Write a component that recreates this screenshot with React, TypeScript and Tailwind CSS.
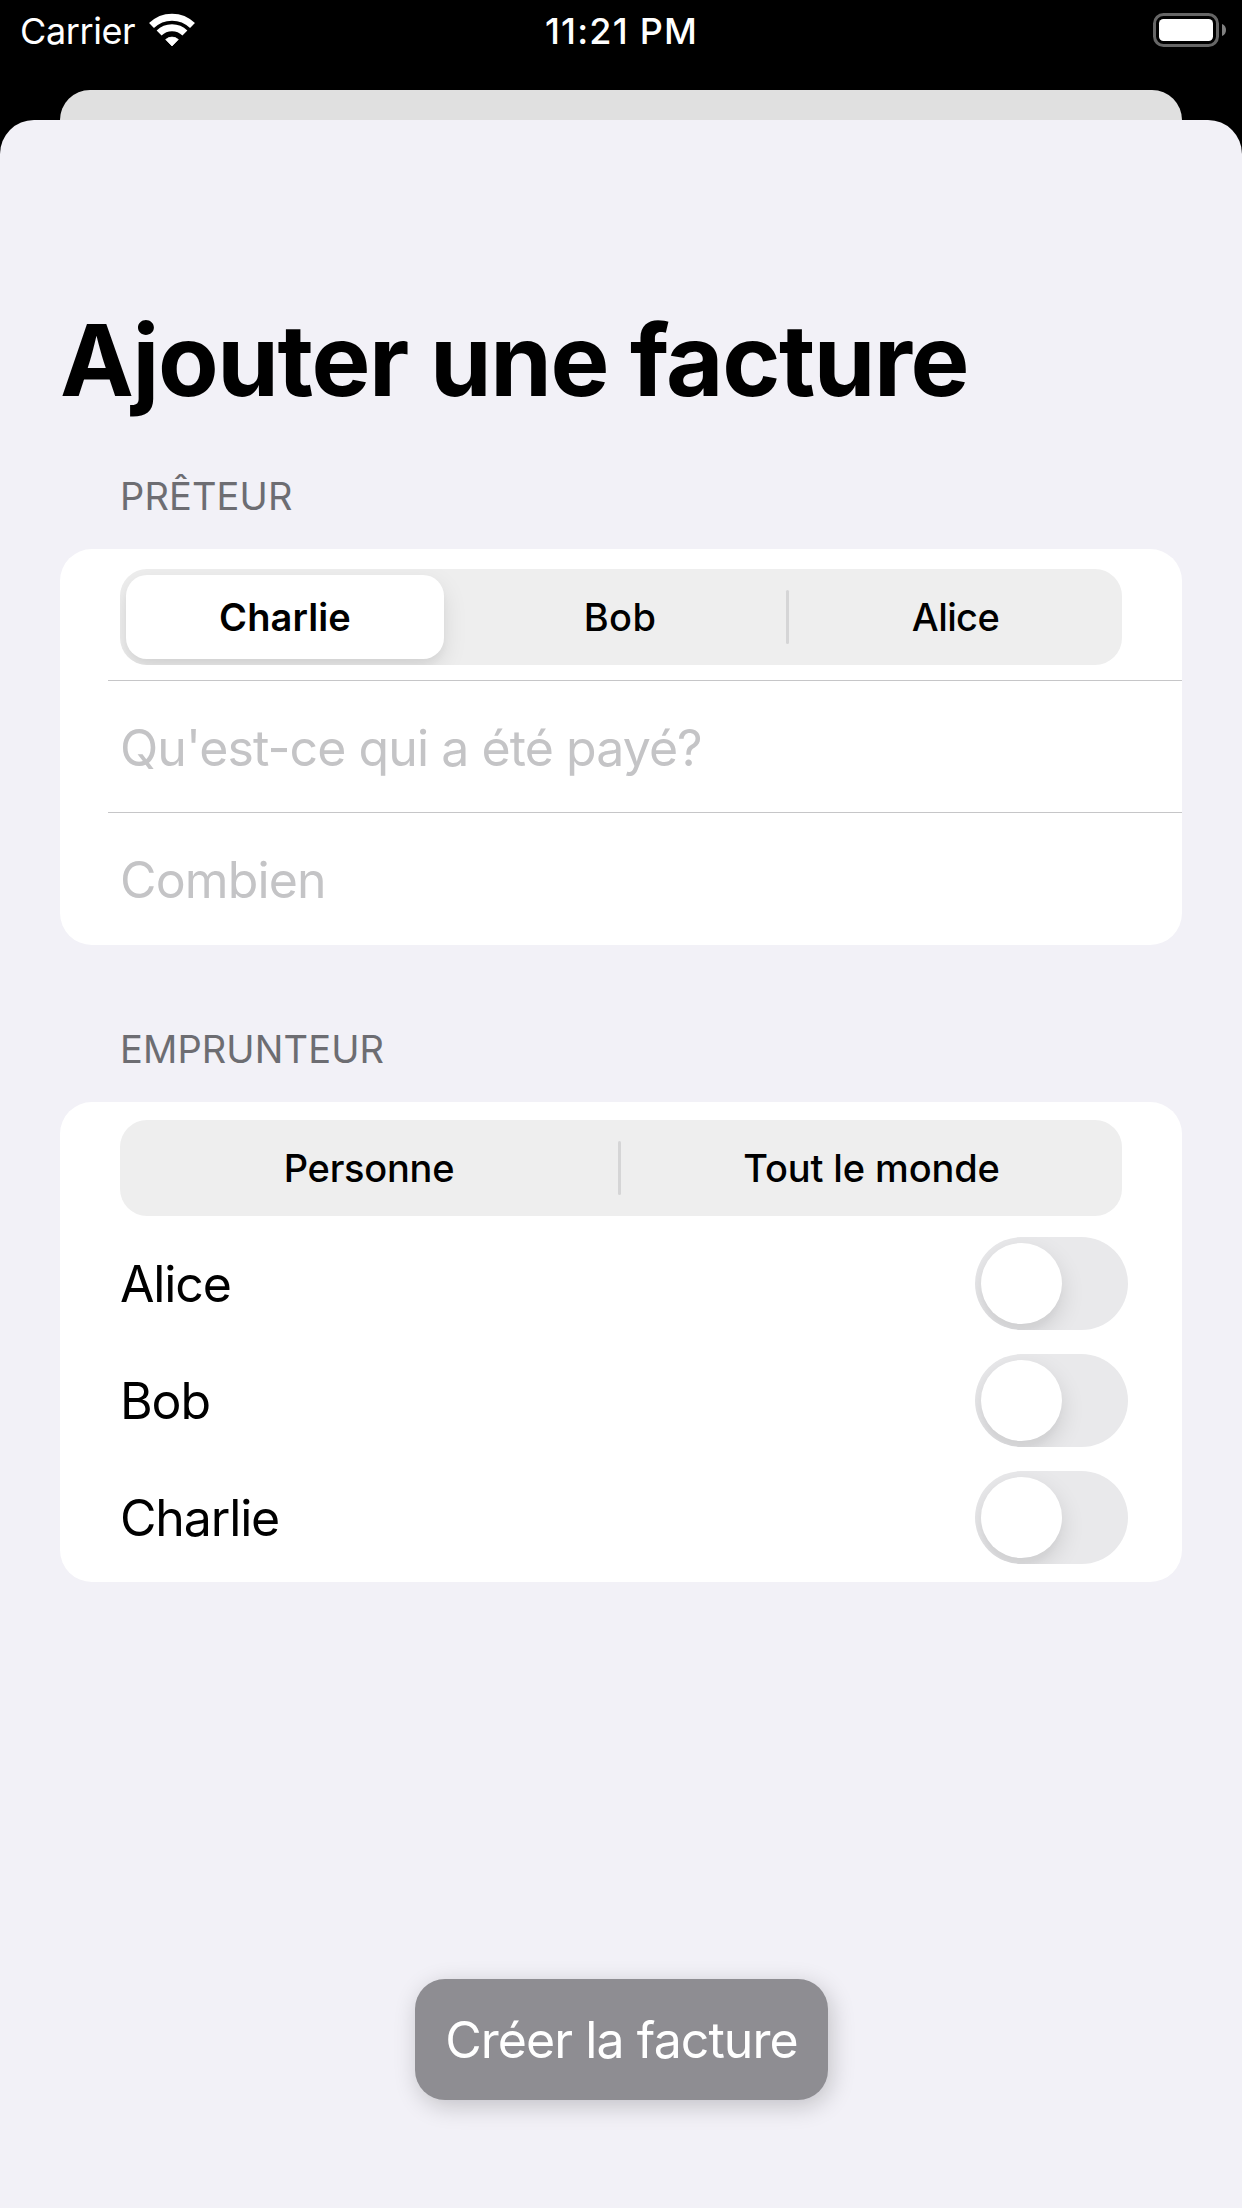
import React from "react";

function WifiIcon() {
  return (
    <svg width="48" height="36" viewBox="0 0 48 36" fill="none" aria-hidden="true">
      <path d="M3.5 13.5A29.3 29.3 0 0 1 44.5 13.5" stroke="white" strokeWidth="7" />
      <path d="M11.1 21.1A18.3 18.3 0 0 1 36.9 21.1" stroke="white" strokeWidth="7" />
      <path
        d="M24 34L17.7 27.5A9.5 9.5 0 0 1 30.3 27.5Z"
        fill="white"
        stroke="white"
        strokeWidth="0.8"
        strokeLinejoin="round"
      />
    </svg>
  );
}

function BatteryIcon() {
  return (
    <svg width="74" height="34" viewBox="0 0 74 34" fill="none" aria-hidden="true">
      <rect x="1.5" y="1.5" width="63" height="31" rx="9" stroke="#666666" strokeWidth="3" />
      <rect x="6" y="6" width="54" height="22" rx="4.5" fill="white" />
      <path d="M69 11C72 12.2 73 14.4 73 17S72 21.8 69 23Z" fill="#808080" />
    </svg>
  );
}

function StatusBar() {
  return (
    <header className="grid h-[90px] grid-cols-3 items-start pt-2 text-white">
      <div className="flex h-[46px] items-center gap-[13px] pl-5">
        <span className="text-[36px] leading-[46px] tracking-[-0.4px]">Carrier</span>
        <span className="-mt-0.5"><WifiIcon /></span>
      </div>
      <span className="pl-px text-center text-[36px] leading-[46px] font-medium tracking-[1.2px]">
        11:21 PM
      </span>
      <div className="flex justify-end pt-[5px] pr-[15px]">
        <BatteryIcon />
      </div>
    </header>
  );
}

function SectionLabel({ children }: { children: React.ReactNode }) {
  return (
    <h2 className="pl-[60px] text-[38px] leading-[46px] font-normal tracking-[0.12px] text-[#6d6d72]">
      {children}
    </h2>
  );
}

function Divider() {
  return <span className="h-[54px] w-[3px] shrink-0 rounded-full bg-[#d5d5d6]" />;
}

function LenderPicker() {
  return (
    <div className="flex h-[96px] items-center overflow-hidden rounded-[27px] bg-[#eeeeee]">
      <button className="ml-1.5 flex h-[84px] w-[318px] items-center justify-center rounded-[21px] bg-white pt-px text-[38px] font-semibold tracking-[0.1px] shadow-[0_9px_24px_rgba(0,0,0,0.10),0_6px_6px_rgba(0,0,0,0.03)]">
        Charlie
      </button>
      <button className="flex w-[342px] items-center justify-center pt-px pl-[10px] text-[38px] font-medium tracking-[0.4px]">
        Bob
      </button>
      <Divider />
      <button className="flex flex-1 items-center justify-center pt-px text-[38px] font-medium tracking-[-0.6px]">
        Alice
      </button>
    </div>
  );
}

function BorrowerPicker() {
  return (
    <div className="flex h-[96px] items-center rounded-[27px] bg-[#eeeeee]">
      <button className="flex w-[498px] items-center justify-center pt-px text-[38px] font-medium tracking-[-0.25px]">
        Personne
      </button>
      <Divider />
      <button className="flex flex-1 items-center justify-center pt-px text-[38px] font-medium tracking-[-0.12px]">
        Tout le monde
      </button>
    </div>
  );
}

function ToggleRow({ name }: { name: string }) {
  return (
    <label className="flex h-[117px] items-center justify-between">
      <span className="text-[50px] leading-[60px] tracking-[-1.15px]">{name}</span>
      <span className="flex h-[93px] w-[153px] items-center overflow-hidden rounded-full bg-[#e9e9eb] pl-1.5">
        <span className="size-[81px] rounded-full bg-white shadow-[0_9px_24px_rgba(0,0,0,0.12),0_9px_6px_rgba(0,0,0,0.02)]" />
      </span>
    </label>
  );
}

export default function App() {
  return (
    <div className="flex h-[2208px] w-[1242px] flex-col overflow-hidden bg-black font-['Inter',sans-serif] text-black">
      <StatusBar />
      <div className="mx-[60px] h-[30px] shrink-0 rounded-t-[32px] bg-[#e0e0e0]" />
      <main className="flex flex-1 flex-col rounded-t-[34px] bg-[#f2f1f7] px-[60px] pt-[180px]">
        <h1 className="text-[99px] leading-[120px] font-bold tracking-[-1.4px]">Ajouter une facture</h1>

        <section className="mt-[53px]">
          <SectionLabel>PRÊTEUR</SectionLabel>
          <div className="mt-[30px] h-[396px] rounded-[32px] bg-white">
            <div className="h-[131px] px-[60px] pt-5">
              <LenderPicker />
            </div>
            <div className="ml-12 flex h-[133px] items-center border-y border-[#c6c6c8] pt-0.5 pl-3 text-[50px] leading-[60px] tracking-[-0.92px] text-[#c4c4c6]">
              Qu'est-ce qui a été payé?
            </div>
            <div className="flex h-[132px] items-center pt-0.5 pl-[60px] text-[50px] leading-[60px] tracking-[-0.88px] text-[#c4c4c6]">
              Combien
            </div>
          </div>
        </section>

        <section className="mt-[81px]">
          <SectionLabel>EMPRUNTEUR</SectionLabel>
          <div className="mt-[30px] h-[480px] rounded-[32px] bg-white px-[60px] pt-[18px]">
            <BorrowerPicker />
            <div className="-mr-1.5 pt-[9px]">
              <ToggleRow name="Alice" />
              <ToggleRow name="Bob" />
              <ToggleRow name="Charlie" />
            </div>
          </div>
        </section>

        <button className="mt-auto mb-[108px] flex h-[121px] w-[413px] items-center justify-center self-center rounded-[30px] bg-[#8e8d92] pt-0.5 pl-px text-[50px] tracking-[-0.92px] text-white shadow-[3px_6px_24px_rgba(0,0,0,0.2)]">
          Créer la facture
        </button>
      </main>
    </div>
  );
}
